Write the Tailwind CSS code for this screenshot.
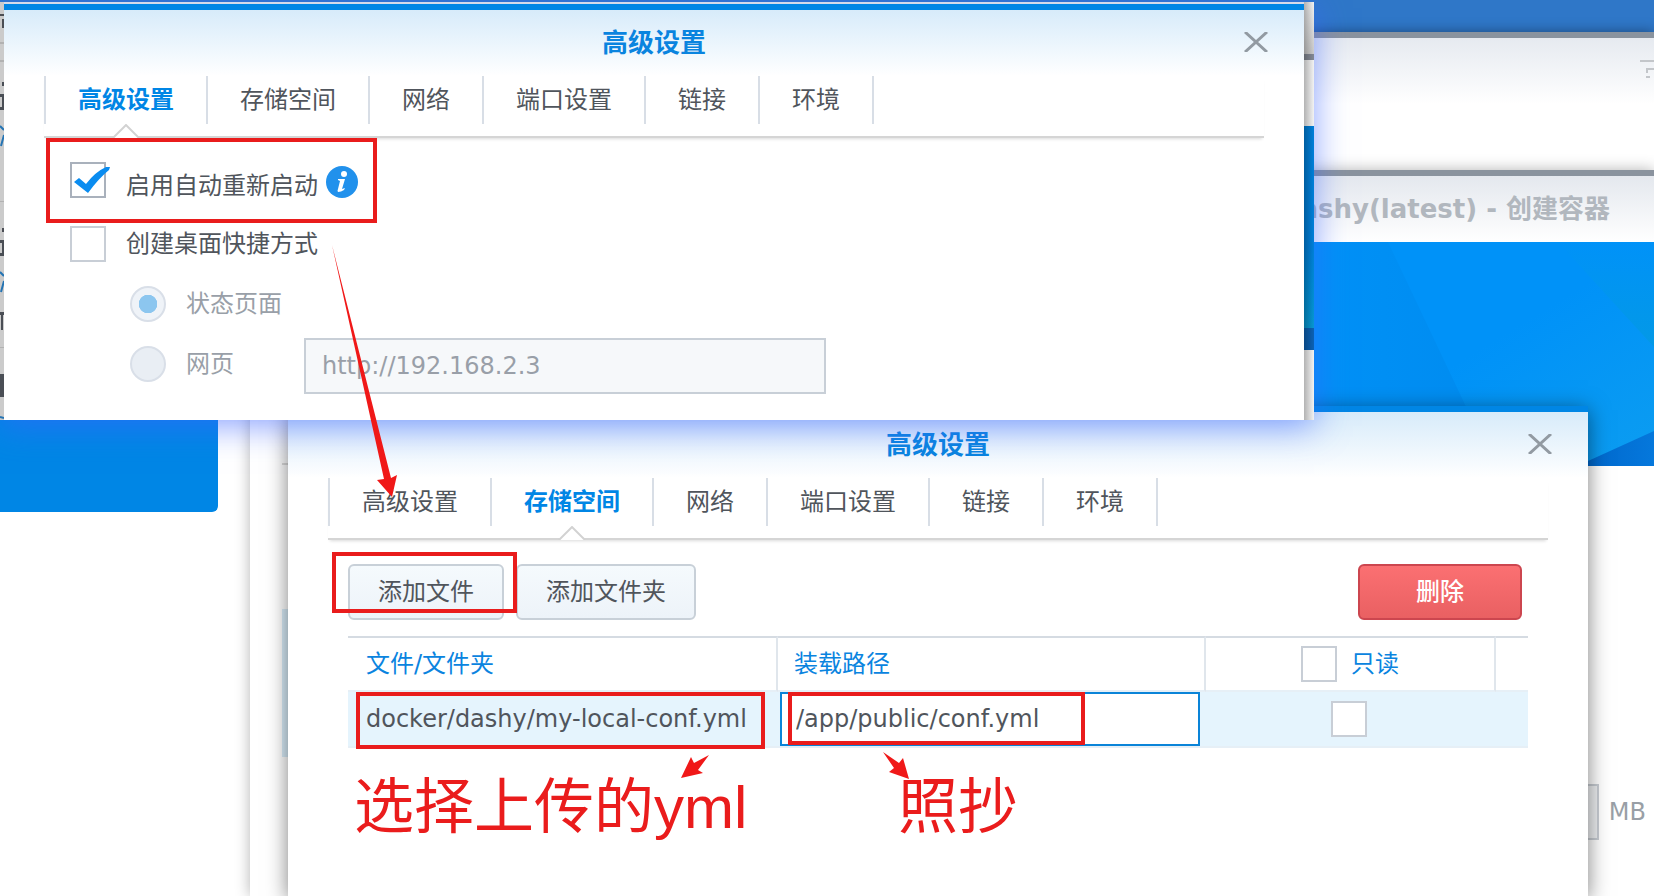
<!DOCTYPE html>
<html lang="zh-CN">
<head>
    <meta charset="UTF-8">
    <meta name="viewport" content="width=device-width, initial-scale=1.0">
    <title>dashy(latest) - 创建容器</title>
    <script src="https://cdn.jsdelivr.net/npm/@tailwindcss/browser@4"></script>
    <style>
        body {
            font-family: 'DejaVu Sans', 'Noto Sans CJK SC', sans-serif;
        }
    </style>
</head>
<body class="relative h-screen overflow-hidden bg-[#2f77c8] text-2xl text-[#50555c]">

    <!-- Desktop windows in the background -->
    <div class="absolute left-0 right-0 top-8 bottom-0 border-t-6 border-[#8a939e] bg-white shadow-[0_0_12px_rgba(0,0,0,0.4)]">
        <div class="flex h-[66px] items-start justify-end bg-linear-to-b from-[#e6eaf0] to-white pt-5">
            <svg class="h-6 w-4" viewBox="0 0 16 24" fill="none" stroke="#c3c6ca" stroke-width="2" aria-hidden="true">
                <path d="M2 3H16M8 11H16M9 11V15M8 19H12" />
            </svg>
        </div>
        <div class="h-[408px] w-[218px] rounded-br-md bg-[#0086e5]"></div>
    </div>

    <div class="absolute left-[250px] right-0 top-[170px] bottom-0 border-t-6 border-[#8a939e] bg-white shadow-[0_0_14px_rgba(0,0,0,0.3)]">
        <header class="flex h-[66px] items-center justify-end bg-linear-to-b from-[#e4e8ee] to-white pr-11">
            <h2 class="text-[26px] font-bold text-[#b1b7be]">dashy(latest) - 创建容器</h2>
        </header>
        <div class="flex">
            <div class="w-[38px] shrink-0 pl-8 pt-[221px]">
                <div class="h-0.5 bg-[#dcdcdc]"></div>
                <div class="mt-36 h-[148px] bg-[#d9edf9]"></div>
            </div>
            <div class="min-w-0 flex-1">
                <div class="flex h-56 justify-end overflow-hidden bg-[#0092f8]">
                    <svg class="h-56 w-[366px] shrink-0" viewBox="0 0 366 224" aria-hidden="true">
                        <defs>
                            <linearGradient id="facet" x1="0" x2="1" y1="0" y2="0">
                                <stop offset="0" stop-color="#0092f8" />
                                <stop offset="1" stop-color="#008cf0" />
                            </linearGradient>
                            <linearGradient id="glow" x1="0" x2="1" y1="0" y2="1">
                                <stop offset="0.5" stop-color="#0092f8" />
                                <stop offset="1" stop-color="#0c9df0" />
                            </linearGradient>
                            <linearGradient id="shade" x1="0" x2="0" y1="0" y2="1">
                                <stop offset="0" stop-color="#0092f8" />
                                <stop offset="1" stop-color="#0399e6" />
                            </linearGradient>
                            <linearGradient id="corner" x1="0" x2="1" y1="0" y2="0">
                                <stop offset="0" stop-color="#0066cb" />
                                <stop offset="1" stop-color="#0578dc" />
                            </linearGradient>
                        </defs>
                        <path d="M0 0H366V224H0Z" fill="url(#glow)" />
                        <path d="M0 0H100L190 190V224H0Z" fill="url(#facet)" />
                        <path d="M270 0L366 105V0Z" fill="url(#shade)" />
                        <path d="M300 219L366 189V224H290Z" fill="url(#corner)" />
                    </svg>
                </div>
                <div class="mt-[318px] flex items-center justify-end gap-2.5 pr-2 text-[#999fa6]">
                    <input id="memory-limit" type="text" disabled class="h-14 w-40 border-2 border-[#c8cdd3] bg-[#eef0f2]">
                    <label for="memory-limit">MB</label>
                </div>
            </div>
        </div>
    </div>

    <!-- Volume settings dialog -->
    <section class="absolute left-[288px] top-[406px] bottom-0 w-[1300px] border-t-6 border-[#0086e5] bg-white shadow-[0_4px_20px_rgba(0,0,0,0.5)]">
        <header class="relative flex h-[66px] items-center justify-center bg-linear-to-b from-[#d7ebfa] to-white">
            <h2 class="text-[26px] font-bold text-[#0a84df]">高级设置</h2>
            <button type="button" aria-label="关闭" class="absolute right-9 top-5.5">
                <svg class="h-5 w-6" viewBox="0 0 24 20" stroke="#929aa2" stroke-width="3" aria-hidden="true"><path d="M1 0L23 20M23 0L1 20" /></svg>
            </button>
        </header>
        <nav class="mx-10 flex h-[62px] border-b-2 border-[#d5d5d5] shadow-[0_3px_3px_-2px_rgba(0,0,0,0.15)]">
            <a href="#" class="flex h-12 items-center border-l-2 border-[#d8dee6] px-8">高级设置</a>
            <a href="#" class="relative flex h-12 items-center border-l-2 border-[#d8dee6] px-8 font-bold text-[#0086e5]">存储空间
                <svg class="absolute -bottom-3.5 left-1/2 h-3.5 w-7 -translate-x-1/2" viewBox="0 0 28 14" fill="#fff" aria-hidden="true"><path d="M1 14L14 1L27 14" stroke="#d2d2d2" stroke-width="2" /></svg>
            </a>
            <a href="#" class="flex h-12 items-center border-l-2 border-[#d8dee6] px-8">网络</a>
            <a href="#" class="flex h-12 items-center border-l-2 border-[#d8dee6] px-8">端口设置</a>
            <a href="#" class="flex h-12 items-center border-l-2 border-[#d8dee6] px-8">链接</a>
            <a href="#" class="flex h-12 items-center border-x-2 border-[#d8dee6] px-8">环境</a>
        </nav>
        <div class="px-[60px] pt-6">
            <div class="flex gap-3">
                <button type="button" class="h-14 rounded-md border-2 border-[#c8d0d8] bg-linear-to-b from-[#f5fafd] to-[#edf3f9] px-7">添加文件</button>
                <button type="button" class="h-14 rounded-md border-2 border-[#c8d0d8] bg-linear-to-b from-[#f5fafd] to-[#edf3f9] px-7">添加文件夹</button>
                <button type="button" class="ml-auto mr-1.5 h-14 w-[164px] rounded-md border-2 border-[#cc464f] bg-linear-to-b from-[#fb7072] to-[#e96062] font-medium text-white">删除</button>
            </div>
            <table class="mt-4 w-full table-fixed border-separate border-spacing-0 text-left">
                <colgroup>
                    <col class="w-[430px]">
                    <col class="w-[428px]">
                    <col class="w-[290px]">
                    <col>
                </colgroup>
                <thead>
                    <tr class="text-[#0a84df]">
                        <th class="h-14 border-y-2 border-r-2 border-y-[#d5dbe2] border-b-[#e6eff6] border-r-[#e0e6ec] p-0 pl-4.5 font-normal">文件/文件夹</th>
                        <th class="h-14 border-y-2 border-r-2 border-y-[#d5dbe2] border-b-[#e6eff6] border-r-[#e0e6ec] p-0 pl-4 font-normal">装载路径</th>
                        <th class="h-14 border-y-2 border-r-2 border-y-[#d5dbe2] border-b-[#e6eff6] border-r-[#e0e6ec] p-0 font-normal">
                            <label class="flex items-center justify-center gap-3.5">
                                <input type="checkbox" class="size-9 appearance-none border-2 border-[#c8ced6] bg-white">只读
                            </label>
                        </th>
                        <th class="h-14 border-y-2 border-y-[#d5dbe2] border-b-[#e6eff6] p-0"></th>
                    </tr>
                </thead>
                <tbody>
                    <tr class="bg-[#e5f4fd]">
                        <td class="h-14 border-b-2 border-[#e6eff6] p-0 pl-4.5">docker/dashy/my-local-conf.yml</td>
                        <td class="h-14 border-b-2 border-[#e6eff6] p-0 pl-0.5 pr-1.5">
                            <input type="text" value="/app/public/conf.yml" aria-label="装载路径" class="block h-[54px] w-full border-2 border-[#0a84d8] bg-white px-3.5">
                        </td>
                        <td class="h-14 border-b-2 border-[#e6eff6] p-0 pr-1">
                            <input type="checkbox" aria-label="只读" class="mx-auto block size-9 appearance-none border-2 border-[#c8ced6] bg-white">
                        </td>
                        <td class="h-14 border-b-2 border-[#e6eff6] p-0"></td>
                    </tr>
                </tbody>
            </table>
        </div>
    </section>

    <!-- Advanced settings dialog, with the strips of page on either side of it -->
    <div class="absolute left-0 top-0.5 isolate flex w-[1314px] bg-[#d5dbea] shadow-[0_6px_32px_rgba(60,100,255,0.6)]">
        <svg class="w-1 shrink-0" viewBox="0 0 4 418" fill="#4a4e55" aria-hidden="true">
            <path d="M0 0H4V418H0Z" fill="#cbcbcb" />
            <path d="M0 40H4V42H0ZM0 58H4V60H0ZM0 199H4V200H0ZM0 345H4V346H0Z" fill="#b2b2b2" />
            <path d="M0 12H4V14H0ZM2 17H4V26H2ZM2 80H4V84H2ZM0 92H4V95H0ZM2 92H4V108H2ZM0 105H4V108H0ZM2 226H4V230H2ZM0 238H4V241H0ZM2 238H4V254H2ZM0 251H4V254H0ZM0 310H4V313H0ZM1 310H3V328H1ZM0 372H4V395H0Z" />
            <path d="M0 124L4 128M4 133L1 144M0 270L4 274M4 279L1 290M0 415L4 416" stroke="#2474b4" stroke-width="2" />
        </svg>
        <section class="mt-0.5 min-w-0 flex-1 border-t-6 border-[#0086e5] bg-white pb-6.5">
            <header class="relative flex h-[66px] items-center justify-center bg-linear-to-b from-[#d7ebfa] to-white">
                <h2 class="text-[26px] font-bold text-[#0a84df]">高级设置</h2>
                <button type="button" aria-label="关闭" class="absolute right-9 top-5.5">
                    <svg class="h-5 w-6" viewBox="0 0 24 20" stroke="#929aa2" stroke-width="3" aria-hidden="true"><path d="M1 0L23 20M23 0L1 20" /></svg>
                </button>
            </header>
            <nav class="mx-10 flex h-[62px] border-b-2 border-[#d5d5d5] shadow-[0_3px_3px_-2px_rgba(0,0,0,0.15)]">
                <a href="#" class="relative flex h-12 items-center border-l-2 border-[#d8dee6] px-8 font-bold text-[#0086e5]">高级设置
                    <svg class="absolute -bottom-3.5 left-1/2 h-3.5 w-7 -translate-x-1/2" viewBox="0 0 28 14" fill="#fff" aria-hidden="true"><path d="M1 14L14 1L27 14" stroke="#d2d2d2" stroke-width="2" /></svg>
                </a>
                <a href="#" class="flex h-12 items-center border-l-2 border-[#d8dee6] px-8">存储空间</a>
                <a href="#" class="flex h-12 items-center border-l-2 border-[#d8dee6] px-8">网络</a>
                <a href="#" class="flex h-12 items-center border-l-2 border-[#d8dee6] px-8">端口设置</a>
                <a href="#" class="flex h-12 items-center border-l-2 border-[#d8dee6] px-8">链接</a>
                <a href="#" class="flex h-12 items-center border-x-2 border-[#d8dee6] px-8">环境</a>
            </nav>
            <form class="px-[66px] pt-6">
                <div class="flex h-10 items-center gap-2">
                    <label class="relative flex h-10 items-end gap-5">
                        <input type="checkbox" checked class="size-9 appearance-none self-start border-2 border-[#a9b1bc] bg-white">
                        <svg class="pointer-events-none absolute left-0 top-0 h-9 w-10" viewBox="0 0 40 36" fill="#0a8cf0" aria-hidden="true"><path d="M4 20L9 16L16 22Q25 10 36 5L40 5L39 8Q29 16 18 31Z" /></svg>
                        启用自动重新启动
                    </label>
                    <button type="button" aria-label="说明">
                        <svg class="size-8" viewBox="0 0 32 32" aria-hidden="true">
                            <circle cx="16" cy="16" r="16" fill="#2191ec" />
                            <circle cx="18" cy="8" r="3" fill="#fff" />
                            <path d="M12 13H19L16 23L19 22L18 24Q15 26 12 26Q11 25 12 23L14 15L12 14Z" fill="#fff" />
                        </svg>
                    </button>
                </div>
                <label class="mt-6 flex h-9 items-center gap-5">
                    <input type="checkbox" class="size-9 appearance-none border-2 border-[#c8ced6] bg-white">创建桌面快捷方式
                </label>
                <label class="ml-[60px] mt-6 flex h-9 items-center gap-5 text-[#999fa8]">
                    <input type="radio" name="shortcut" checked disabled class="size-9 appearance-none rounded-full border-2 border-[#d9dfe8] bg-[#eff3f8] bg-radial from-[#8cc6ef] from-0% via-[#8cc6ef] via-40% to-[#eff3f8] to-42%">状态页面
                </label>
                <div class="ml-[60px] mt-4 flex h-14 text-[#999fa8]">
                    <label class="mt-2 flex h-9 w-[174px] items-center gap-5">
                        <input type="radio" name="shortcut" disabled class="size-9 appearance-none rounded-full border-2 border-[#d9dfe8] bg-[#e9eef4]">网页
                    </label>
                    <input type="text" value="http://192.168.2.3" disabled aria-label="网页" class="h-14 w-[522px] border-2 border-[#c8cfd7] bg-[#f6f8fa] px-4">
                </div>
            </form>
        </section>
        <div class="relative flex w-2.5 shrink-0 flex-col bg-white" aria-hidden="true">
            <div class="h-[52px] bg-linear-to-b from-white to-[#d5d5d5]"></div>
            <div class="h-1.5 bg-[#8a909c]"></div>
            <div class="h-[66px]"></div>
            <div class="h-[202px] bg-linear-to-b from-[#0086e5] from-60% to-[#08a0dc]"></div>
            <div class="h-[22px] bg-[#0c66bd]"></div>
            <div class="absolute inset-0 bg-linear-to-r from-black/30 to-black/5"></div>
        </div>
    </div>

    <!-- Annotations -->
    <div class="pointer-events-none absolute left-[46px] top-[138px] h-[85px] w-[331px] border-4 border-[#e91c1c]"></div>
    <div class="pointer-events-none absolute left-[332px] top-[552px] h-[61px] w-[185px] border-4 border-[#e91c1c]"></div>
    <div class="pointer-events-none absolute left-[356px] top-[692px] h-[57px] w-[409px] border-4 border-[#e91c1c]"></div>
    <div class="pointer-events-none absolute left-[788px] top-[692px] h-[53px] w-[297px] border-4 border-[#e91c1c]"></div>
    <svg class="pointer-events-none absolute left-0 top-0 h-[896px] w-[1654px]" viewBox="0 0 1654 896" fill="#f01818" aria-hidden="true">
        <path d="M332 245L391 478L397 475L392 497L377 480L384 479Z" />
        <path d="M709 755L698 770L703 773L681 778L691 757L694 763Z" />
        <path d="M883 752L899 763L903 758L909 779L889 772L894 768Z" />
    </svg>
    <p class="absolute left-[354px] top-[778px] whitespace-nowrap font-['Liberation_Sans','Noto_Sans_CJK_SC',sans-serif] text-[60px] leading-[60px] text-[#ea1c1c]">选择上传的yml</p>
    <p class="absolute left-[898px] top-[778px] whitespace-nowrap font-['Liberation_Sans','Noto_Sans_CJK_SC',sans-serif] text-[60px] leading-[60px] text-[#ea1c1c]">照抄</p>

</body>
</html>
